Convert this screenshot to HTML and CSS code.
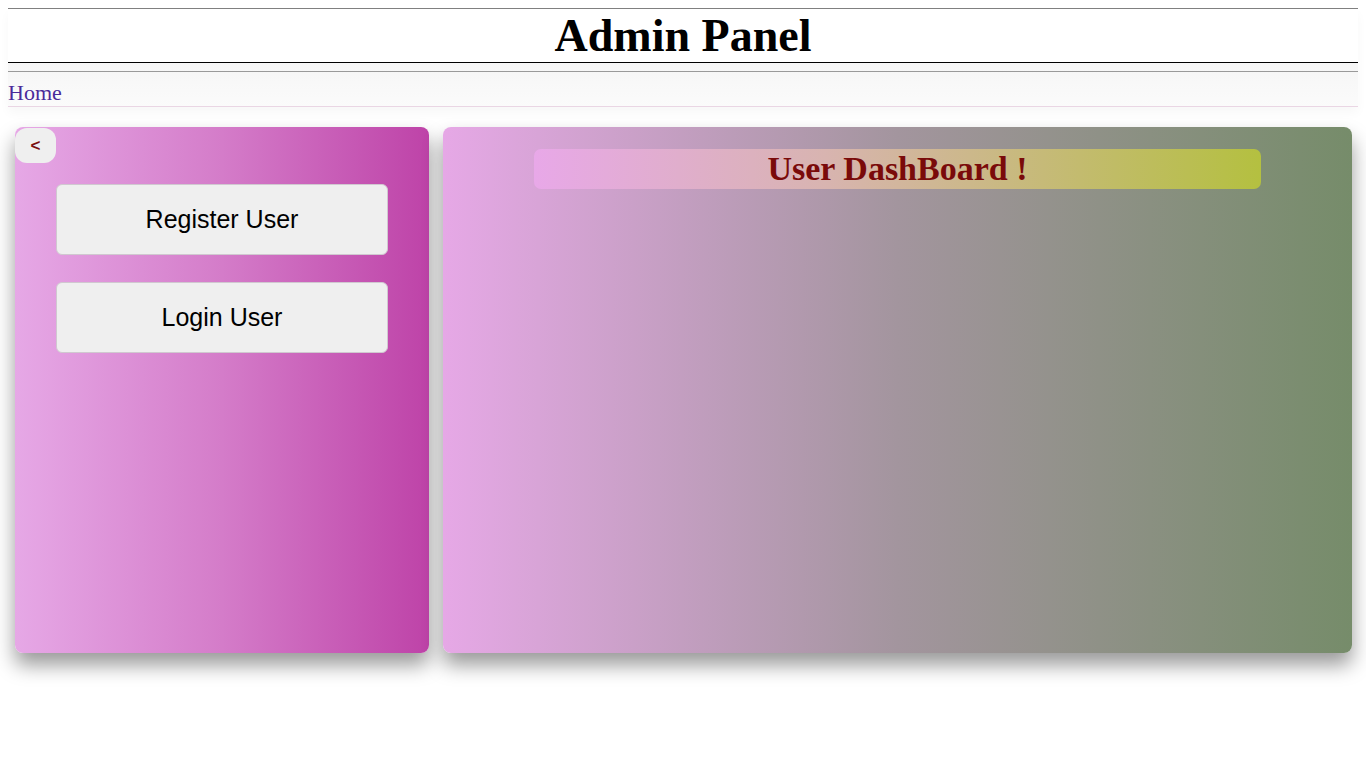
FILE: index.html
```html
<!DOCTYPE html>
<html>
<head>
<meta charset="utf-8">
<title>Admin Panel</title>
<link rel="stylesheet" href="styles.css">
</head>
<body>
<div class="top">
  <h1 class="title">Admin Panel</h1>
  <div class="sep"></div>
  <nav class="crumbs"><a class="home" href="#">Home</a></nav>
</div>
<main class="layout">
  <aside class="side">
    <button class="back">&lt;</button>
    <div class="menu">
      <button class="menu-btn">Register User</button>
      <button class="menu-btn">Login User</button>
    </div>
  </aside>
  <section class="content">
    <h2 class="dash-title">User DashBoard !</h2>
  </section>
</main>
</body>
</html>
```

FILE: styles.css
```css
html, body {
  margin: 0;
  padding: 0;
  background: #ffffff;
}
body {
  padding: 8px 8px 60px 8px;
  font-family: "Liberation Serif", serif;
}
.top {
  background: linear-gradient(#efefef, #fbfbfb);
  box-shadow: 0 6px 10px rgba(0,0,0,0.03);
}
.title {
  margin: 0;
  height: 53px;
  line-height: 53px;
  text-align: center;
  background: #ffffff;
  border-top: 1px solid #808080;
  border-bottom: 1px solid #000000;
  font-size: 46px;
  font-weight: bold;
  color: #000;
}
.sep {
  height: 8px;
  border-bottom: 1px solid #9a9a9a;
}
.crumbs {
  height: 34px;
  border-bottom: 1px solid #ead6e4;
  display: flex;
  align-items: center;
}
.home {
  font-size: 22px;
  color: #4a2a9a;
  text-decoration: none;
  padding-top: 8px;
}
.layout {
  display: flex;
  gap: 14px;
  padding: 20px 6px 0 7px;
}
.side {
  width: 414px;
  height: 526px;
  border-radius: 8px;
  background: linear-gradient(to right, #e6a8e6 0%, #d47cc9 50%, #be43a8 100%);
  box-shadow: 0 12px 20px rgba(0,0,0,0.4);
  display: flex;
  flex-direction: column;
}
.back {
  width: 41px;
  height: 35px;
  margin: 1px 0 0 0;
  border: none;
  border-radius: 12px;
  background: #efefef;
  color: #7a1010;
  font-family: "Liberation Sans", sans-serif;
  font-weight: bold;
  font-size: 17px;
  padding: 0;
}
.menu {
  display: flex;
  flex-direction: column;
  gap: 27px;
  padding: 21px 41px 0 41px;
}
.menu-btn {
  height: 71px;
  width: 332px;
  background: #efefef;
  border: 1px solid #d0c8d0;
  border-radius: 6px;
  font-family: "Liberation Sans", sans-serif;
  font-size: 25px;
  color: #000;
}
.content {
  flex: 1;
  height: 526px;
  border-radius: 8px;
  background: linear-gradient(to right, #e6a8e6 0%, #a3959e 50%, #768c6a 100%);
  box-shadow: 0 12px 20px rgba(0,0,0,0.4);
  padding-top: 22px;
  box-sizing: border-box;
}
.dash-title {
  margin: 0 91px 0 91px;
  height: 40px;
  line-height: 40px;
  border-radius: 7px;
  background: linear-gradient(to right, #e8a8e8 0%, #d8b4b0 40%, #b4c040 100%);
  text-align: center;
  font-size: 34px;
  font-weight: bold;
  color: #7a0a0a;
  font-family: "Liberation Serif", serif;
}
```
